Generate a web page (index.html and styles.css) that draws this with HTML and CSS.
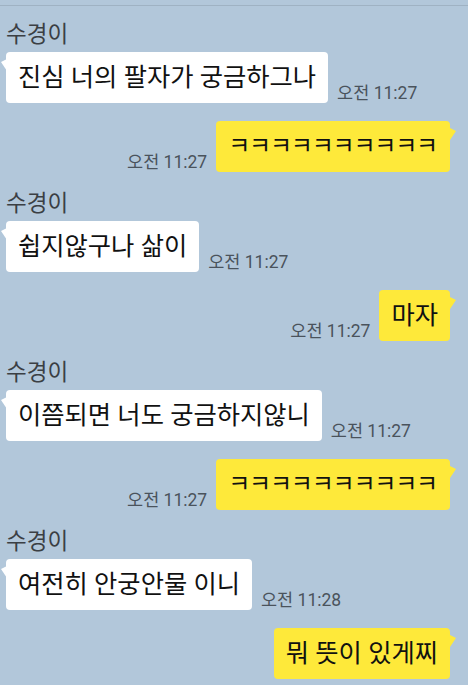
FILE: index.html
```html
<!DOCTYPE html>
<html lang="ko">
<head>
    <meta charset="UTF-8">
    <meta name="viewport" content="width=device-width, initial-scale=1.0">
    <title>수경이</title>
    <link rel="stylesheet" href="styles.css">
</head>
<body>
    <div class="top-line"></div>
    <main class="chat">
        <div class="msg left">
            <div class="name">수경이</div>
            <div class="row">
                <div class="bubble">진심 너의 팔자가 궁금하그나</div>
                <span class="time">오전 11:27</span>
            </div>
        </div>
        <div class="msg right">
            <div class="row">
                <span class="time">오전 11:27</span>
                <div class="bubble kk">ㅋㅋㅋㅋㅋㅋㅋㅋㅋㅋ</div>
            </div>
        </div>
        <div class="msg left">
            <div class="name">수경이</div>
            <div class="row">
                <div class="bubble">쉽지않구나 삶이</div>
                <span class="time">오전 11:27</span>
            </div>
        </div>
        <div class="msg right">
            <div class="row">
                <span class="time">오전 11:27</span>
                <div class="bubble">마자</div>
            </div>
        </div>
        <div class="msg left">
            <div class="name">수경이</div>
            <div class="row">
                <div class="bubble">이쯤되면 너도 궁금하지않니</div>
                <span class="time">오전 11:27</span>
            </div>
        </div>
        <div class="msg right">
            <div class="row">
                <span class="time">오전 11:27</span>
                <div class="bubble kk">ㅋㅋㅋㅋㅋㅋㅋㅋㅋㅋ</div>
            </div>
        </div>
        <div class="msg left">
            <div class="name">수경이</div>
            <div class="row">
                <div class="bubble">여전히 안궁안물 이니</div>
                <span class="time">오전 11:28</span>
            </div>
        </div>
        <div class="msg right">
            <div class="row">
                <div class="bubble">뭐 뜻이 있게찌</div>
            </div>
        </div>
    </main>
</body>
</html>
```

FILE: styles.css
```css
body {
    margin: 0;
    padding: 0;
    background-color: #b2c7da;
    font-family: Roboto, "Noto Sans CJK KR", sans-serif;
    overflow: hidden;
}

.top-line {
    margin-top: 5px;
    height: 1px;
    background-color: #9fb2c3;
}

.chat {
    display: flex;
    flex-direction: column;
    gap: 18px;
    padding: 15px 18px 0 6px;
}

.msg.right .row {
    justify-content: flex-end;
}

.name {
    font-size: 22.5px;
    line-height: 27px;
    color: #3b3f44;
    margin-bottom: 4px;
}

.row {
    display: flex;
    align-items: flex-end;
}

.bubble {
    position: relative;
    padding: 12px 12px;
    font-size: 25.3px;
    line-height: 27px;
    color: #111;
    background-color: #fff;
    border-radius: 4px;
    white-space: nowrap;
}

.bubble.kk {
    font-size: 24px;
    letter-spacing: -1.2px;
    padding-right: 13px;
}

.bubble::before {
    content: "";
    position: absolute;
    top: 7px;
    width: 6px;
    height: 12px;
    background-color: inherit;
}

.left .bubble::before {
    left: -5px;
    clip-path: polygon(100% 0, 0 25%, 100% 100%);
}

.right .bubble {
    background-color: #fee93a;
}

.right .bubble::before {
    right: -6px;
    clip-path: polygon(0 0, 100% 25%, 0 100%);
}

.time {
    font-size: 17.5px;
    line-height: 18px;
    color: #4a535c;
    margin: 0 9px 1px;
}
```
